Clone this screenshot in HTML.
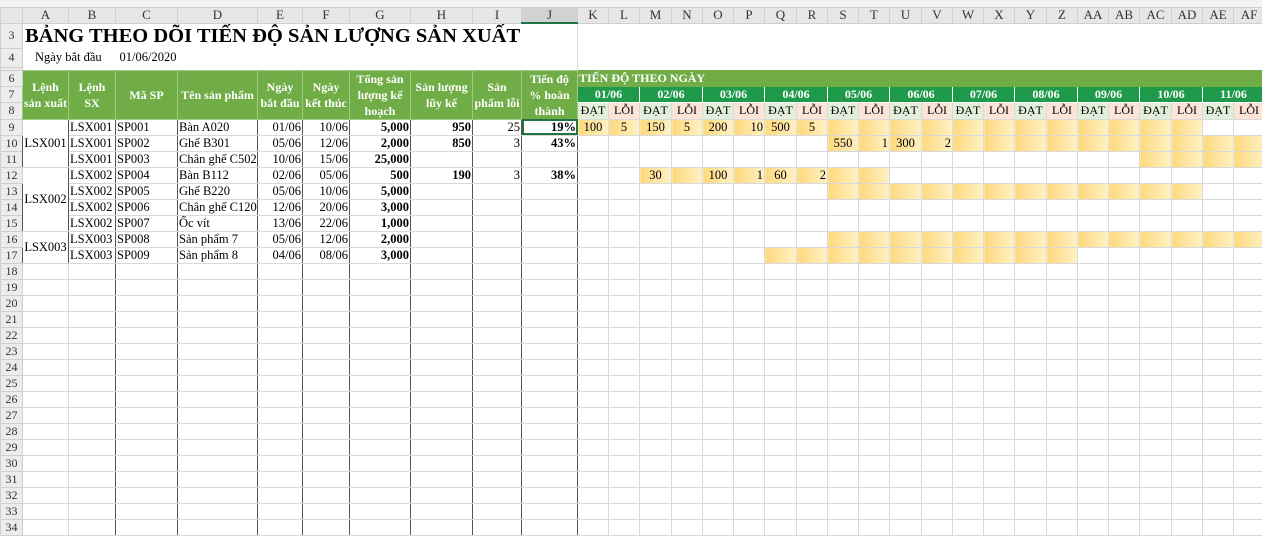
<!DOCTYPE html>
<html><head><meta charset="utf-8"><style>
body{margin:0;width:1262px;height:530px;overflow:hidden;background:#fff;font-family:"Liberation Serif",serif;}
.top{position:absolute;left:0;top:0;width:1262px;height:7px;background:#f2f2f2;}
table{position:absolute;left:0;top:7px;width:1264px;border-collapse:collapse;table-layout:fixed;font-size:12.5px;color:#000;}
td{border:1px solid #d9d9d9;padding:0 1px;height:15px;line-height:15px;white-space:nowrap;overflow:hidden;}
tr.ch td{background:#e6e6e6;color:#333;text-align:center;font-size:13px;height:14px;line-height:14px;border-color:#cfcfcf;padding:0;}
td.rh{background:#ececec;color:#333;text-align:center;font-size:12px;padding:0;border-color:#cfcfcf;}
.hg{background:#70ad47;color:#fff;font-weight:bold;text-align:center;font-size:12px;line-height:16px;border:1px solid #9fcb83;white-space:normal;padding:0 1px;}
.g7{background:#1f9a4b;color:#fff;font-weight:bold;text-align:center;font-size:12px;border:1px solid #fff;}
.da{background:#e2efda;text-align:center;font-size:12px;padding:0;}
.lo{background:#fce4d6;text-align:center;font-size:12px;padding:0;}
.k{border-left:1px solid #555;}
.L{border-left:1px solid #555;border-right:1px solid #555;}
.y{background:linear-gradient(90deg,#fed97c,#fff1c6);}
.r{text-align:right;}.c{text-align:center;}.b{font-weight:bold;}
.sel{outline:2px solid #217346;outline-offset:-2px;}
</style></head><body>
<div class="top"></div>
<table>
<colgroup><col style="width:22px"><col style="width:46px"><col style="width:47px"><col style="width:62px"><col style="width:80px"><col style="width:45px"><col style="width:47px"><col style="width:61px"><col style="width:62px"><col style="width:49px"><col style="width:56px">
<col style="width:31px"><col style="width:31px"><col style="width:32px"><col style="width:31px"><col style="width:31px"><col style="width:31px"><col style="width:32px"><col style="width:31px"><col style="width:31px"><col style="width:31px"><col style="width:32px"><col style="width:31px"><col style="width:31px"><col style="width:31px"><col style="width:32px"><col style="width:31px"><col style="width:31px"><col style="width:31px"><col style="width:32px"><col style="width:31px"><col style="width:31px"><col style="width:31px"></colgroup>
<tr class="ch"><td style="background:#e6e6e6"></td><td>A</td><td>B</td><td>C</td><td>D</td><td>E</td><td>F</td><td>G</td><td>H</td><td>I</td><td style="background:#d2d2d2;border-bottom:2px solid #217346">J</td><td>K</td><td>L</td><td>M</td><td>N</td><td>O</td><td>P</td><td>Q</td><td>R</td><td>S</td><td>T</td><td>U</td><td>V</td><td>W</td><td>X</td><td>Y</td><td>Z</td><td>AA</td><td>AB</td><td>AC</td><td>AD</td><td>AE</td><td>AF</td></tr>
<tr style="height:25px"><td class="rh">3</td><td colspan="10" style="border:none;border-right:1px solid #d9d9d9;font-weight:bold;font-size:20.5px;line-height:24px;padding-left:2px;overflow:visible">BẢNG THEO DÕI TIẾN ĐỘ SẢN LƯỢNG SẢN XUẤT</td><td colspan="22" style="border:none"></td></tr>
<tr style="height:19px"><td class="rh">4</td><td colspan="2" style="border:none;padding-left:12px;overflow:visible">Ngày bắt đầu</td><td colspan="8" style="border:none;border-right:1px solid #d9d9d9;padding-left:4px">01/06/2020</td><td colspan="22" style="border:none"></td></tr>
<tr style="height:3px"><td class="rh" style="height:2px;line-height:2px"></td><td colspan="10" style="height:2px;border:none;border-right:1px solid #d9d9d9"></td><td colspan="22" style="height:2px;border:none"></td></tr>
<tr><td class="rh">6</td><td class="hg" rowspan="3">Lệnh sản xuất</td><td class="hg" rowspan="3">Lệnh SX</td><td class="hg" rowspan="3">Mã SP</td><td class="hg" rowspan="3">Tên sản phẩm</td><td class="hg" rowspan="3">Ngày bắt đầu</td><td class="hg" rowspan="3">Ngày kết thúc</td><td class="hg" rowspan="3">Tổng sản lượng kế hoạch</td><td class="hg" rowspan="3">Sản lượng lũy kế</td><td class="hg" rowspan="3">Sản phẩm lỗi</td><td class="hg" rowspan="3">Tiến độ % hoàn thành</td><td class="hg" colspan="22" style="text-align:left;border-color:#70ad47;font-size:12px;line-height:15px">TIẾN ĐỘ THEO NGÀY</td></tr>
<tr><td class="rh">7</td><td class="g7" colspan="2">01/06</td><td class="g7" colspan="2">02/06</td><td class="g7" colspan="2">03/06</td><td class="g7" colspan="2">04/06</td><td class="g7" colspan="2">05/06</td><td class="g7" colspan="2">06/06</td><td class="g7" colspan="2">07/06</td><td class="g7" colspan="2">08/06</td><td class="g7" colspan="2">09/06</td><td class="g7" colspan="2">10/06</td><td class="g7" colspan="2">11/06</td></tr>
<tr><td class="rh">8</td><td class="da k">ĐẠT</td><td class="lo">LỖI</td><td class="da k">ĐẠT</td><td class="lo">LỖI</td><td class="da k">ĐẠT</td><td class="lo">LỖI</td><td class="da k">ĐẠT</td><td class="lo">LỖI</td><td class="da k">ĐẠT</td><td class="lo">LỖI</td><td class="da k">ĐẠT</td><td class="lo">LỖI</td><td class="da k">ĐẠT</td><td class="lo">LỖI</td><td class="da k">ĐẠT</td><td class="lo">LỖI</td><td class="da k">ĐẠT</td><td class="lo">LỖI</td><td class="da k">ĐẠT</td><td class="lo">LỖI</td><td class="da k">ĐẠT</td><td class="lo">LỖI</td></tr>

<tr><td class="rh">9</td><td class="L c" rowspan="3">LSX001</td><td class="L">LSX001</td><td class="L">SP001</td><td class="L">Bàn A020</td><td class="L r">01/06</td><td class="L r">10/06</td><td class="L r b">5,000</td><td class="L r b">950</td><td class="L r">25</td><td class="L r b sel">19%</td><td class="k y c">100</td><td class="y c">5</td><td class="k y c">150</td><td class="y c">5</td><td class="k y c">200</td><td class="y r">10</td><td class="k y c">500</td><td class="y c">5</td><td class="k y"></td><td class="y"></td><td class="k y"></td><td class="y"></td><td class="k y"></td><td class="y"></td><td class="k y"></td><td class="y"></td><td class="k y"></td><td class="y"></td><td class="k y"></td><td class="y"></td><td class="k"></td><td></td></tr>
<tr><td class="rh">10</td><td class="L">LSX001</td><td class="L">SP002</td><td class="L">Ghế B301</td><td class="L r">05/06</td><td class="L r">12/06</td><td class="L r b">2,000</td><td class="L r b">850</td><td class="L r">3</td><td class="L r b">43%</td><td class="k"></td><td></td><td class="k"></td><td></td><td class="k"></td><td></td><td class="k"></td><td></td><td class="k y c">550</td><td class="y r">1</td><td class="k y c">300</td><td class="y r">2</td><td class="k y"></td><td class="y"></td><td class="k y"></td><td class="y"></td><td class="k y"></td><td class="y"></td><td class="k y"></td><td class="y"></td><td class="k y"></td><td class="y"></td></tr>
<tr><td class="rh">11</td><td class="L">LSX001</td><td class="L">SP003</td><td class="L">Chân ghế C502</td><td class="L r">10/06</td><td class="L r">15/06</td><td class="L r b">25,000</td><td class="L"></td><td class="L"></td><td class="L"></td><td class="k"></td><td></td><td class="k"></td><td></td><td class="k"></td><td></td><td class="k"></td><td></td><td class="k"></td><td></td><td class="k"></td><td></td><td class="k"></td><td></td><td class="k"></td><td></td><td class="k"></td><td></td><td class="k y"></td><td class="y"></td><td class="k y"></td><td class="y"></td></tr>
<tr><td class="rh">12</td><td class="L c" rowspan="4">LSX002</td><td class="L">LSX002</td><td class="L">SP004</td><td class="L">Bàn B112</td><td class="L r">02/06</td><td class="L r">05/06</td><td class="L r b">500</td><td class="L r b">190</td><td class="L r">3</td><td class="L r b">38%</td><td class="k"></td><td></td><td class="k y c">30</td><td class="y"></td><td class="k y c">100</td><td class="y r">1</td><td class="k y c">60</td><td class="y r">2</td><td class="k y"></td><td class="y"></td><td class="k"></td><td></td><td class="k"></td><td></td><td class="k"></td><td></td><td class="k"></td><td></td><td class="k"></td><td></td><td class="k"></td><td></td></tr>
<tr><td class="rh">13</td><td class="L">LSX002</td><td class="L">SP005</td><td class="L">Ghế B220</td><td class="L r">05/06</td><td class="L r">10/06</td><td class="L r b">5,000</td><td class="L"></td><td class="L"></td><td class="L"></td><td class="k"></td><td></td><td class="k"></td><td></td><td class="k"></td><td></td><td class="k"></td><td></td><td class="k y"></td><td class="y"></td><td class="k y"></td><td class="y"></td><td class="k y"></td><td class="y"></td><td class="k y"></td><td class="y"></td><td class="k y"></td><td class="y"></td><td class="k y"></td><td class="y"></td><td class="k"></td><td></td></tr>
<tr><td class="rh">14</td><td class="L">LSX002</td><td class="L">SP006</td><td class="L">Chân ghế C120</td><td class="L r">12/06</td><td class="L r">20/06</td><td class="L r b">3,000</td><td class="L"></td><td class="L"></td><td class="L"></td><td class="k"></td><td></td><td class="k"></td><td></td><td class="k"></td><td></td><td class="k"></td><td></td><td class="k"></td><td></td><td class="k"></td><td></td><td class="k"></td><td></td><td class="k"></td><td></td><td class="k"></td><td></td><td class="k"></td><td></td><td class="k"></td><td></td></tr>
<tr><td class="rh">15</td><td class="L">LSX002</td><td class="L">SP007</td><td class="L">Ốc vít</td><td class="L r">13/06</td><td class="L r">22/06</td><td class="L r b">1,000</td><td class="L"></td><td class="L"></td><td class="L"></td><td class="k"></td><td></td><td class="k"></td><td></td><td class="k"></td><td></td><td class="k"></td><td></td><td class="k"></td><td></td><td class="k"></td><td></td><td class="k"></td><td></td><td class="k"></td><td></td><td class="k"></td><td></td><td class="k"></td><td></td><td class="k"></td><td></td></tr>
<tr><td class="rh">16</td><td class="L c" rowspan="2">LSX003</td><td class="L">LSX003</td><td class="L">SP008</td><td class="L">Sản phẩm 7</td><td class="L r">05/06</td><td class="L r">12/06</td><td class="L r b">2,000</td><td class="L"></td><td class="L"></td><td class="L"></td><td class="k"></td><td></td><td class="k"></td><td></td><td class="k"></td><td></td><td class="k"></td><td></td><td class="k y"></td><td class="y"></td><td class="k y"></td><td class="y"></td><td class="k y"></td><td class="y"></td><td class="k y"></td><td class="y"></td><td class="k y"></td><td class="y"></td><td class="k y"></td><td class="y"></td><td class="k y"></td><td class="y"></td></tr>
<tr><td class="rh">17</td><td class="L">LSX003</td><td class="L">SP009</td><td class="L">Sản phẩm 8</td><td class="L r">04/06</td><td class="L r">08/06</td><td class="L r b">3,000</td><td class="L"></td><td class="L"></td><td class="L"></td><td class="k"></td><td></td><td class="k"></td><td></td><td class="k"></td><td></td><td class="k y"></td><td class="y"></td><td class="k y"></td><td class="y"></td><td class="k y"></td><td class="y"></td><td class="k y"></td><td class="y"></td><td class="k y"></td><td class="y"></td><td class="k"></td><td></td><td class="k"></td><td></td><td class="k"></td><td></td></tr>
<tr><td class="rh">18</td><td></td><td class="L"></td><td class="L"></td><td class="L"></td><td class="L"></td><td class="L"></td><td class="L"></td><td class="L"></td><td class="L"></td><td class="L"></td><td class="k"></td><td></td><td class="k"></td><td></td><td class="k"></td><td></td><td class="k"></td><td></td><td class="k"></td><td></td><td class="k"></td><td></td><td class="k"></td><td></td><td class="k"></td><td></td><td class="k"></td><td></td><td class="k"></td><td></td><td class="k"></td><td></td></tr>
<tr><td class="rh">19</td><td></td><td class="L"></td><td class="L"></td><td class="L"></td><td class="L"></td><td class="L"></td><td class="L"></td><td class="L"></td><td class="L"></td><td class="L"></td><td class="k"></td><td></td><td class="k"></td><td></td><td class="k"></td><td></td><td class="k"></td><td></td><td class="k"></td><td></td><td class="k"></td><td></td><td class="k"></td><td></td><td class="k"></td><td></td><td class="k"></td><td></td><td class="k"></td><td></td><td class="k"></td><td></td></tr>
<tr><td class="rh">20</td><td></td><td class="L"></td><td class="L"></td><td class="L"></td><td class="L"></td><td class="L"></td><td class="L"></td><td class="L"></td><td class="L"></td><td class="L"></td><td class="k"></td><td></td><td class="k"></td><td></td><td class="k"></td><td></td><td class="k"></td><td></td><td class="k"></td><td></td><td class="k"></td><td></td><td class="k"></td><td></td><td class="k"></td><td></td><td class="k"></td><td></td><td class="k"></td><td></td><td class="k"></td><td></td></tr>
<tr><td class="rh">21</td><td></td><td class="L"></td><td class="L"></td><td class="L"></td><td class="L"></td><td class="L"></td><td class="L"></td><td class="L"></td><td class="L"></td><td class="L"></td><td class="k"></td><td></td><td class="k"></td><td></td><td class="k"></td><td></td><td class="k"></td><td></td><td class="k"></td><td></td><td class="k"></td><td></td><td class="k"></td><td></td><td class="k"></td><td></td><td class="k"></td><td></td><td class="k"></td><td></td><td class="k"></td><td></td></tr>
<tr><td class="rh">22</td><td></td><td class="L"></td><td class="L"></td><td class="L"></td><td class="L"></td><td class="L"></td><td class="L"></td><td class="L"></td><td class="L"></td><td class="L"></td><td class="k"></td><td></td><td class="k"></td><td></td><td class="k"></td><td></td><td class="k"></td><td></td><td class="k"></td><td></td><td class="k"></td><td></td><td class="k"></td><td></td><td class="k"></td><td></td><td class="k"></td><td></td><td class="k"></td><td></td><td class="k"></td><td></td></tr>
<tr><td class="rh">23</td><td></td><td class="L"></td><td class="L"></td><td class="L"></td><td class="L"></td><td class="L"></td><td class="L"></td><td class="L"></td><td class="L"></td><td class="L"></td><td class="k"></td><td></td><td class="k"></td><td></td><td class="k"></td><td></td><td class="k"></td><td></td><td class="k"></td><td></td><td class="k"></td><td></td><td class="k"></td><td></td><td class="k"></td><td></td><td class="k"></td><td></td><td class="k"></td><td></td><td class="k"></td><td></td></tr>
<tr><td class="rh">24</td><td></td><td class="L"></td><td class="L"></td><td class="L"></td><td class="L"></td><td class="L"></td><td class="L"></td><td class="L"></td><td class="L"></td><td class="L"></td><td class="k"></td><td></td><td class="k"></td><td></td><td class="k"></td><td></td><td class="k"></td><td></td><td class="k"></td><td></td><td class="k"></td><td></td><td class="k"></td><td></td><td class="k"></td><td></td><td class="k"></td><td></td><td class="k"></td><td></td><td class="k"></td><td></td></tr>
<tr><td class="rh">25</td><td></td><td class="L"></td><td class="L"></td><td class="L"></td><td class="L"></td><td class="L"></td><td class="L"></td><td class="L"></td><td class="L"></td><td class="L"></td><td class="k"></td><td></td><td class="k"></td><td></td><td class="k"></td><td></td><td class="k"></td><td></td><td class="k"></td><td></td><td class="k"></td><td></td><td class="k"></td><td></td><td class="k"></td><td></td><td class="k"></td><td></td><td class="k"></td><td></td><td class="k"></td><td></td></tr>
<tr><td class="rh">26</td><td></td><td class="L"></td><td class="L"></td><td class="L"></td><td class="L"></td><td class="L"></td><td class="L"></td><td class="L"></td><td class="L"></td><td class="L"></td><td class="k"></td><td></td><td class="k"></td><td></td><td class="k"></td><td></td><td class="k"></td><td></td><td class="k"></td><td></td><td class="k"></td><td></td><td class="k"></td><td></td><td class="k"></td><td></td><td class="k"></td><td></td><td class="k"></td><td></td><td class="k"></td><td></td></tr>
<tr><td class="rh">27</td><td></td><td class="L"></td><td class="L"></td><td class="L"></td><td class="L"></td><td class="L"></td><td class="L"></td><td class="L"></td><td class="L"></td><td class="L"></td><td class="k"></td><td></td><td class="k"></td><td></td><td class="k"></td><td></td><td class="k"></td><td></td><td class="k"></td><td></td><td class="k"></td><td></td><td class="k"></td><td></td><td class="k"></td><td></td><td class="k"></td><td></td><td class="k"></td><td></td><td class="k"></td><td></td></tr>
<tr><td class="rh">28</td><td></td><td class="L"></td><td class="L"></td><td class="L"></td><td class="L"></td><td class="L"></td><td class="L"></td><td class="L"></td><td class="L"></td><td class="L"></td><td class="k"></td><td></td><td class="k"></td><td></td><td class="k"></td><td></td><td class="k"></td><td></td><td class="k"></td><td></td><td class="k"></td><td></td><td class="k"></td><td></td><td class="k"></td><td></td><td class="k"></td><td></td><td class="k"></td><td></td><td class="k"></td><td></td></tr>
<tr><td class="rh">29</td><td></td><td class="L"></td><td class="L"></td><td class="L"></td><td class="L"></td><td class="L"></td><td class="L"></td><td class="L"></td><td class="L"></td><td class="L"></td><td class="k"></td><td></td><td class="k"></td><td></td><td class="k"></td><td></td><td class="k"></td><td></td><td class="k"></td><td></td><td class="k"></td><td></td><td class="k"></td><td></td><td class="k"></td><td></td><td class="k"></td><td></td><td class="k"></td><td></td><td class="k"></td><td></td></tr>
<tr><td class="rh">30</td><td></td><td class="L"></td><td class="L"></td><td class="L"></td><td class="L"></td><td class="L"></td><td class="L"></td><td class="L"></td><td class="L"></td><td class="L"></td><td class="k"></td><td></td><td class="k"></td><td></td><td class="k"></td><td></td><td class="k"></td><td></td><td class="k"></td><td></td><td class="k"></td><td></td><td class="k"></td><td></td><td class="k"></td><td></td><td class="k"></td><td></td><td class="k"></td><td></td><td class="k"></td><td></td></tr>
<tr><td class="rh">31</td><td></td><td class="L"></td><td class="L"></td><td class="L"></td><td class="L"></td><td class="L"></td><td class="L"></td><td class="L"></td><td class="L"></td><td class="L"></td><td class="k"></td><td></td><td class="k"></td><td></td><td class="k"></td><td></td><td class="k"></td><td></td><td class="k"></td><td></td><td class="k"></td><td></td><td class="k"></td><td></td><td class="k"></td><td></td><td class="k"></td><td></td><td class="k"></td><td></td><td class="k"></td><td></td></tr>
<tr><td class="rh">32</td><td></td><td class="L"></td><td class="L"></td><td class="L"></td><td class="L"></td><td class="L"></td><td class="L"></td><td class="L"></td><td class="L"></td><td class="L"></td><td class="k"></td><td></td><td class="k"></td><td></td><td class="k"></td><td></td><td class="k"></td><td></td><td class="k"></td><td></td><td class="k"></td><td></td><td class="k"></td><td></td><td class="k"></td><td></td><td class="k"></td><td></td><td class="k"></td><td></td><td class="k"></td><td></td></tr>
<tr><td class="rh">33</td><td></td><td class="L"></td><td class="L"></td><td class="L"></td><td class="L"></td><td class="L"></td><td class="L"></td><td class="L"></td><td class="L"></td><td class="L"></td><td class="k"></td><td></td><td class="k"></td><td></td><td class="k"></td><td></td><td class="k"></td><td></td><td class="k"></td><td></td><td class="k"></td><td></td><td class="k"></td><td></td><td class="k"></td><td></td><td class="k"></td><td></td><td class="k"></td><td></td><td class="k"></td><td></td></tr>
<tr><td class="rh">34</td><td></td><td class="L"></td><td class="L"></td><td class="L"></td><td class="L"></td><td class="L"></td><td class="L"></td><td class="L"></td><td class="L"></td><td class="L"></td><td class="k"></td><td></td><td class="k"></td><td></td><td class="k"></td><td></td><td class="k"></td><td></td><td class="k"></td><td></td><td class="k"></td><td></td><td class="k"></td><td></td><td class="k"></td><td></td><td class="k"></td><td></td><td class="k"></td><td></td><td class="k"></td><td></td></tr>
</table>
</body></html>
